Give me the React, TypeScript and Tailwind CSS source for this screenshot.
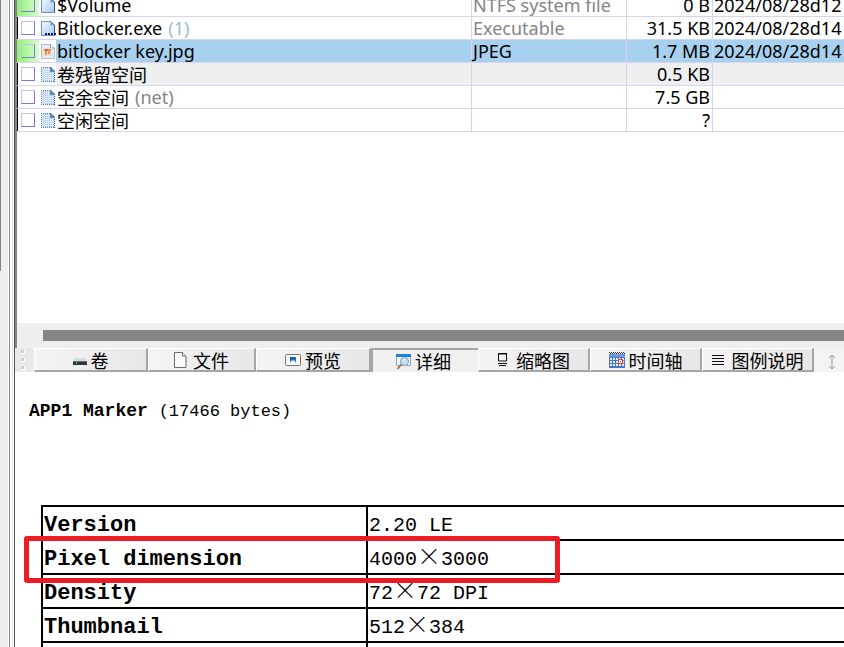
import React from 'react'

type FileRow = {
  name: string
  note?: string
  noteClass?: string
  cjk?: boolean
  type?: string
  size: string
  date?: string
  icon: 'file' | 'exe' | 'image' | 'space'
  marked?: boolean
  selected?: boolean
  shaded?: boolean
}

const files: FileRow[] = [
  { name: '$Volume', type: 'NTFS system file', size: '0 B', date: '2024/08/28d12', icon: 'file', marked: true },
  { name: 'Bitlocker.exe', note: '(1)', noteClass: 'text-[#9db9d3]', type: 'Executable', size: '31.5 KB', date: '2024/08/28d14', icon: 'exe' },
  { name: 'bitlocker key.jpg', type: 'JPEG', size: '1.7 MB', date: '2024/08/28d14', icon: 'image', marked: true, selected: true },
  { name: '卷残留空间', cjk: true, size: '0.5 KB', icon: 'space', shaded: true },
  { name: '空余空间', cjk: true, note: '(net)', noteClass: 'text-[#858585]', size: '7.5 GB', icon: 'space' },
  { name: '空闲空间', cjk: true, size: '?', icon: 'space' },
]

const details = [
  { label: 'Version', value: '2.20 LE' },
  { label: 'Pixel dimension', value: '4000×3000' },
  { label: 'Density', value: '72×72 DPI' },
  { label: 'Thumbnail', value: '512×384' },
  { label: '', value: '' },
]

const FileIcon = ({ kind }: { kind: FileRow['icon'] }) => {
  if (kind === 'image') {
    return (
      <svg width="14" height="17" viewBox="0 0 14 17" className="shrink-0">
        <path d="M.5 1.5h9.500l3.500 3.500v10.500h-13z" fill="#e6ebf5" stroke="#b3bdd0" />
        <path d="M9.500 1.500v3.500h4" fill="#fff" stroke="#8fa0bf" />
        <path d="M2 5h9v8H2z" fill="#f9dcc4" />
        <path d="M3 6h7v2H3zM4 8h2v4H4zM7 8h2v3H7z" fill="#dd9762" />
        <path d="M4 6h3v2H4z" fill="#c4764a" />
      </svg>
    )
  }
  if (kind === 'space') {
    return (
      <svg width="14" height="17" viewBox="0 0 14 17" className="shrink-0">
        <path d="M0 1h10l4 4v11H0z" fill="#dbe9fa" />
        <path d="M2.500 2v13M4.500 2v13M6.500 2v13M8.500 2v13M10.500 6v9M12.500 6v9" stroke="#a9c6ec" strokeDasharray="1 1" />
        <path d="M.5 1v15M0 1.500h10M0 15.500h14" stroke="#5f84bd" strokeDasharray="1 1" fill="none" />
        <path d="M13.500 5v11" stroke="#34527f" strokeDasharray="1 1" />
        <path d="M9 1h1l4 4v1H9z" fill="#6288bb" />
      </svg>
    )
  }
  return (
    <svg width="14" height="17" viewBox="0 0 14 17" className="shrink-0 overflow-visible">
      <defs>
        <linearGradient id={`paper-${kind}`} x1="0" y1="0" x2="1" y2="1">
          <stop offset="0" stopColor="#f4f9ff" />
          <stop offset="1" stopColor="#a9cbf5" />
        </linearGradient>
      </defs>
      <path d="M.5 1.500h9.500l3.500 3.500v10.500H.5z" fill={`url(#paper-${kind})`} stroke="#6d8fc4" />
      <path d="M9.500 1.500l4 4v10" stroke="#34527f" fill="none" />
      <path d="M9.500 1.500v4h4z" fill="#7ea0cf" />
      {kind === 'exe' && <path d="M4 13h2v2H4zM7 13h2v2H7zM10 13h2v2h-2zM13 13h2v2h-2z" fill="#14146e" />}
    </svg>
  )
}

const VolumeIcon = () => (
  <svg width="14" height="16" viewBox="0 0 14 16">
    <path d="M2 6h10l2 3H0z" fill="#d9dde1" />
    <path d="M0 9h14v4H0z" fill="#333638" />
    <path d="M0 9h14v1H0z" fill="#6a6e70" />
    <path d="M3 10h1v2H3z" fill="#38d64b" />
  </svg>
)

const DocumentIcon = () => (
  <svg width="13" height="16" viewBox="0 0 13 16" fill="#fcfcfc" stroke="#6b6b6b">
    <path d="M.5.5h8l3.500 3.500v11.500H.5z" />
    <path d="M8.500.5v3.500h3.500" />
  </svg>
)

const PreviewIcon = () => (
  <svg width="16" height="12" viewBox="0 0 16 12">
    <rect x=".5" y=".5" width="15" height="11" rx="1" fill="#fafafa" stroke="#777" />
    <path d="M5 3h6v6H5z" fill="#1a72c8" />
    <path d="M5 9l2-3 1 1 1-1 2 3z" fill="#fff" />
    <path d="M5 3h3v2H5z" fill="#0b56a5" />
  </svg>
)

const DetailsIcon = () => (
  <svg width="15" height="17" viewBox="0 0 15 17">
    <path d="M.5 1.500h14v11H.5z" fill="#eef4fb" stroke="#8aa9ce" />
    <path d="M0 1h15v3H0z" fill="#1d7fdc" />
    <path d="M5.500 11l-4 5" stroke="#a9764b" strokeWidth="2" />
    <circle cx="8.500" cy="8.500" r="4" fill="#c3e3f5" stroke="#8a9caf" />
    <path d="M6.500 8c0-1 1-2 2-2" stroke="#fff" fill="none" />
  </svg>
)

const ThumbnailsIcon = () => (
  <svg width="11" height="13" viewBox="0 0 11 13" fill="none" stroke="#111">
    <path d="M1.500 1v7h8V1z" />
    <path d="M1 .5h9M1 10.500h9M2 12.500h7" />
  </svg>
)

const CalendarIcon = () => (
  <svg width="16" height="16" viewBox="0 0 16 16">
    <path d="M0 3h16v13H0z" fill="#4a77c4" />
    <path d="M0 .5h16" stroke="#333" strokeDasharray="1 1" />
    <path d="M1 1.500h15" stroke="#333" strokeDasharray="1 1" />
    <path d="M0 2h16v3H0z" fill="#6f98dc" />
    <path d="M1 6h2v2H1zM4 6h2v2H4zM7 6h2v2H7zM10 6h2v2h-2zM13 6h2v2h-2zM1 9h2v2H1zM4 9h2v2H4zM7 9h2v2H7zM13 9h2v2h-2zM1 12h2v2H1zM4 12h2v2H4zM7 12h2v2H7zM10 12h2v2h-2zM13 12h2v2h-2z" fill="#e4eefb" />
    <path d="M9.500 7.500h4v4h-4z" fill="#fff" stroke="#e2412d" />
    <path d="M11 9h1v1h-1z" fill="#e2412d" />
  </svg>
)

const LegendIcon = () => (
  <svg width="12" height="12" viewBox="0 0 12 12" stroke="#111">
    <path d="M0 1.500h12M0 4.500h12M0 7.500h12M0 10.500h12" />
  </svg>
)

const tabs = [
  { label: '卷', icon: <VolumeIcon />, size: 'w-[114px] gap-1' },
  { label: '文件', icon: <DocumentIcon />, size: 'w-[108px] gap-1.5' },
  { label: '预览', icon: <PreviewIcon />, size: 'w-[115px] gap-1' },
  { label: '详细', icon: <DetailsIcon />, size: 'w-[107px] gap-1', active: true },
  { label: '缩略图', icon: <ThumbnailsIcon />, size: 'w-[112px] gap-2' },
  { label: '时间轴', icon: <CalendarIcon />, size: 'w-[112px] gap-1' },
  { label: '图例说明', icon: <LegendIcon />, size: 'w-[112px] gap-2' },
]

const FileList = () => (
  <table className="w-full table-fixed border-separate border-spacing-0 text-[18px] leading-[22px]">
    <colgroup>
      <col className="w-[39px]" />
      <col className="w-[416px]" />
      <col className="w-[155px]" />
      <col className="w-[86px]" />
      <col />
    </colgroup>
    <tbody>
      {files.map((file) => {
        const fill = file.selected ? 'bg-[#a8d1f0]' : file.shaded ? 'bg-[#efefef]' : 'bg-white'
        return (
          <tr key={file.name} className="h-[23px]">
            <td className="border-b border-[#d6d5f1] p-0">
              <div className="flex h-[22px] items-center">
                <div
                  className={`flex h-full w-[22px] items-center ${
                    file.marked ? 'bg-linear-to-r from-[#8df36d] to-[#d9fbd0] pl-1' : 'border-l border-black pl-[3px]'
                  }`}
                >
                  <input
                    type="checkbox"
                    aria-label={file.name}
                    className="size-3.5 appearance-none border border-t-[#c4bff0] border-r-[#7f76dc] border-b-[#7f76dc] border-l-[#c4bff0]"
                  />
                </div>
                <div className="pl-0.5">
                  <FileIcon kind={file.icon} />
                </div>
              </div>
            </td>
            <td className={`border-r border-b border-[#d6d5f1] p-0 pl-px ${fill}`}>
              <div className="flex h-[22px] items-center gap-1.5 whitespace-nowrap">
                <span className={file.cjk ? "font-['Noto_Sans_CJK_SC',sans-serif]" : ''}>{file.name}</span>
                {file.note && <span className={file.noteClass}>{file.note}</span>}
              </div>
            </td>
            <td
              className={`border-r border-b border-[#d6d5f1] p-0 pl-px whitespace-nowrap ${fill} ${
                file.selected ? 'text-black' : 'text-[#858585]'
              }`}
            >
              {file.type}
            </td>
            <td className={`border-r border-b border-[#d6d5f1] p-0 pr-0.5 text-right whitespace-nowrap ${fill}`}>
              {file.size}
            </td>
            <td className={`border-b border-[#d6d5f1] p-0 pl-px whitespace-nowrap ${fill}`}>{file.date}</td>
          </tr>
        )
      })}
    </tbody>
  </table>
)

const Toolbar = () => (
  <div className="flex h-6 shrink-0 bg-linear-to-r from-[#e9e9e9] to-[#f4f4f4] font-['Noto_Sans_CJK_SC',sans-serif] text-[18px] leading-5">
    <div className="flex w-[19px] shrink-0 flex-col items-center justify-center gap-1 pr-1">
      <span className="size-1 border-r border-b border-white bg-[#cfcfcf]" />
      <span className="size-1 border-r border-b border-white bg-[#cfcfcf]" />
      <span className="size-1 border-r border-b border-white bg-[#cfcfcf]" />
    </div>
    {tabs.map((tab) => (
      <button
        key={tab.label}
        type="button"
        className={`flex shrink-0 items-center justify-center whitespace-nowrap ${tab.size} ${
          tab.active
            ? 'border-t-2 border-l-2 border-[#a5a5a5] bg-[#f0f0f0] pr-1'
            : 'border-t border-r-2 border-b-2 border-l border-t-white border-r-[#a5a5a5] border-b-[#a5a5a5] border-l-white bg-linear-to-r from-[#f4f4f4] to-[#e7e7e7]'
        }`}
      >
        {tab.icon}
        {tab.label}
      </button>
    ))}
    <button type="button" aria-label="Resize" className="flex flex-1 items-center justify-center pt-1 pl-1.5">
      <svg width="8" height="16" viewBox="0 0 8 16" fill="none" stroke="#9b8fa3">
        <path d="M4 1v14M1 4l3-3 3 3M1 12l3 3 3-3" />
      </svg>
    </button>
  </div>
)

const DetailsPane = () => (
  <div className="flex-1 overflow-hidden bg-white font-['Liberation_Mono','Noto_Sans_CJK_SC',monospace]">
    <p className="pt-[25px] pl-3.5 text-[17px] leading-7 whitespace-pre">
      <b className="text-[18px]">APP1 Marker </b>
      (17466 bytes)
    </p>
    <div className="relative mt-[79px] ml-[26px]">
      <table className="w-full table-fixed border-separate border-spacing-0 text-left">
        <colgroup>
          <col className="w-[327px]" />
          <col />
        </colgroup>
        <tbody>
          {details.map((row, index) => (
            <tr key={index} className="h-[34px]">
              <th className="border-t-2 border-x-2 border-black p-0 pt-1.5 pl-px text-[22px] leading-[26px] font-bold">
                {row.label}
              </th>
              <td className="border-t-2 border-black p-0 pt-1.5 pl-px text-[20px] leading-[26px]">
                {row.value.split('×').map((part, i) => (
                  <React.Fragment key={i}>
                    {i > 0 && <span className="font-['Noto_Sans_CJK_SC'] text-[24px] leading-[0] font-light">×</span>}
                    {part}
                  </React.Fragment>
                ))}
              </td>
            </tr>
          ))}
        </tbody>
      </table>
      {/* highlight around the pixel dimension row */}
      <div className="absolute top-[31px] -left-[17px] h-[47px] w-[536px] rounded-[3px] border-5 border-[#ed1c24]" />
    </div>
  </div>
)

export default function App() {
  return (
    <div className="flex h-screen overflow-hidden bg-white font-['Noto_Sans','Noto_Sans_CJK_SC',sans-serif] text-black">
      <div className="flex w-[15px] shrink-0">
        <div className="w-2 bg-[#efefef]">
          <div className="h-[271px] w-px bg-[#858585]" />
        </div>
        <div className="ml-px w-px bg-[#85858b]" />
        <div className="ml-0.5 w-px bg-[#d5e6f7]" />
        <div className="ml-px w-px bg-[#555]" />
      </div>
      <main className="flex min-w-0 flex-1 flex-col">
        <div className="flex h-[348px] shrink-0 flex-col border-l-2 border-[#858585]">
          <div className="min-h-0 flex-1 overflow-hidden">
            <div className="-mt-1.5">
              <FileList />
            </div>
          </div>
          <div className="h-[25px] shrink-0 bg-[#efefef] pt-[7px] pl-[26px]">
            <div className="h-[11px] bg-[#858585]" />
          </div>
        </div>
        <Toolbar />
        <DetailsPane />
      </main>
    </div>
  )
}
